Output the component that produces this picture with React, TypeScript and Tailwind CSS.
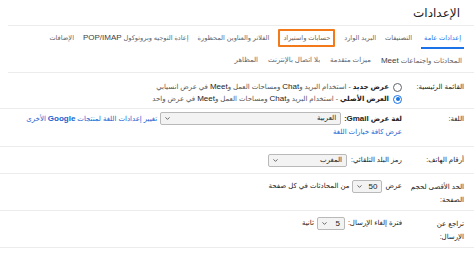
import { ChevronDown } from 'lucide-react';

function Select({ value, width, extra = '' }: { value: string; width: string; extra?: string }) {
  return (
    <span
      className={`inline-flex items-center justify-between h-[13px] border border-[#b9b9b9] rounded-[2px] bg-[#f3f3f3] pr-[4px] pl-[3px] text-[7px] text-[#222] shrink-0 ${width} ${extra}`}
    >
      <span>{value}</span>
      <ChevronDown size={7} strokeWidth={3} className="text-[#555]" />
    </span>
  );
}

function Radio({ checked }: { checked?: boolean }) {
  if (checked) {
    return (
      <span className="flex items-center justify-center w-[9px] h-[9px] rounded-full border-[1.5px] border-[#1a73e8] shrink-0">
        <span className="w-[4px] h-[4px] rounded-full bg-[#1a73e8]" />
      </span>
    );
  }
  return <span className="w-[9px] h-[9px] rounded-full border border-[#5f6368] shrink-0" />;
}

const topTabs = ['التصنيفات', 'البريد الوارد'];

export default function App() {
  return (
    <div
      dir="rtl"
      className="w-[474px] h-[254px] overflow-hidden bg-white text-[#222] whitespace-nowrap font-['Liberation_Sans','DejaVu_Sans',sans-serif]"
    >
      {/* heading */}
      <div className="ml-2 h-[26px] border-b border-[#ececec] pr-[14px] pt-[4px] text-[12px] text-[#202124]">
        الإعدادات
      </div>

      {/* tabs */}
      <div className="flex items-stretch h-[23px] pr-[10px] gap-[9px] text-[6.6px] text-[#5f6368]">
        <div className="flex items-center pt-[2px] px-[3px] border-b-[2px] border-[#1a73e8] text-[#1a73e8]">
          إعدادات عامة
        </div>
        {topTabs.map((t) => (
          <div key={t} className="flex items-center">
            {t}
          </div>
        ))}
        <div className="flex items-center">
          <span className="border-[2.5px] border-[#f27a1a] rounded-[1px] px-[3px] h-[18px] flex items-center">
            حسابات واستيراد
          </span>
        </div>
        <div className="flex items-center">الفلاتر والعناوين المحظورة</div>
        <div className="flex items-center">
          إعادة التوجيه وبروتوكول&nbsp;<span className="text-[#3c4043] text-[8px]">POP/IMAP</span>
        </div>
        <div className="flex items-center">الإضافات</div>
      </div>
      <div className="ml-2 flex items-center h-[24px] pr-[12px] gap-[10px] border-b border-[#ececec] text-[7px] text-[#5f6368]">
        <div>
          المحادثات واجتماعات <span className="text-[#3c4043] text-[8px]">Meet</span>
        </div>
        <div>ميزات متقدمة</div>
        <div>بلا اتصال بالإنترنت</div>
        <div>المظاهر</div>
      </div>

      {/* settings rows */}
      <div className="text-[7px]">
        <div className="flex h-[36px] pt-[8px] border-b border-[#ececec]">
          <div className="w-[72px] pr-[10px] leading-[12px] shrink-0">القائمة الرئيسية:</div>
          <div className="flex flex-col leading-[12px]">
            <div className="flex items-center gap-[4px]">
              <Radio />
              <span>
                <b className="font-semibold">عرض جديد</b>
                <span className="text-[#555]"> - استخدام البريد و</span>
                <span className="text-[8px]">Chat</span>
                <span className="text-[#555]"> ومساحات العمل و</span>
                <span className="text-[8px]">Meet</span>
                <span className="text-[#555]"> في عرض انسيابي</span>
              </span>
            </div>
            <div className="flex items-center gap-[4px]">
              <Radio checked />
              <span>
                <b className="font-semibold">العرض الأصلي</b>
                <span className="text-[#555]"> - استخدام البريد و</span>
                <span className="text-[8px]">Chat</span>
                <span className="text-[#555]"> ومساحات العمل و</span>
                <span className="text-[8px]">Meet</span>
                <span className="text-[#555]"> في عرض واحد</span>
              </span>
            </div>
          </div>
        </div>

        <div className="flex h-[38px] pt-[3px] border-b border-[#ececec]">
          <div className="w-[72px] pr-[10px] pt-[1px] leading-[12px] shrink-0">اللغة:</div>
          <div className="flex flex-col">
            <div className="flex items-center h-[13px] gap-[3px]">
              <b className="font-semibold">
                لغة عرض <span className="text-[8px]">Gmail</span>:
              </b>
              <Select value="العربية" width="w-[181px]" />
              <span className="text-[#1a5fd0]">
                تغيير إعدادات اللغة لمنتجات <span className="font-semibold text-[8px]">Google</span> الأخرى
              </span>
            </div>
            <div className="mt-[1px] leading-[12px] text-[#1a5fd0]">عرض كافة خيارات اللغة</div>
          </div>
        </div>

        <div className="flex h-[27px] items-center border-b border-[#ececec]">
          <div className="w-[72px] pr-[10px] shrink-0">أرقام الهاتف:</div>
          <div className="flex items-center gap-[4px]">
            <span>رمز البلد التلقائي:</span>
            <Select value="المغرب" width="w-[79px]" />
          </div>
        </div>

        <div className="flex h-[37px] pt-[6px] border-b border-[#ececec]">
          <div className="w-[72px] pr-[10px] leading-[13px] shrink-0">
            الحد الأقصى لحجم
            <br />
            الصفحة:
          </div>
          <div className="flex items-center h-[13px] gap-[3px]">
            <span>عرض</span>
            <Select value="50" width="w-[30px]" extra="text-[8px]" />
            <span>من المحادثات في كل صفحة</span>
          </div>
        </div>

        <div className="flex h-[37px] pt-[6px] border-b border-[#ececec]">
          <div className="w-[72px] pr-[10px] leading-[13px] shrink-0">
            تراجع عن
            <br />
            الإرسال:
          </div>
          <div className="flex items-center h-[13px] gap-[3px]">
            <span>فترة إلغاء الإرسال:</span>
            <Select value="5" width="w-[28px]" extra="text-[8px]" />
            <span>ثانية</span>
          </div>
        </div>
      </div>
    </div>
  );
}
